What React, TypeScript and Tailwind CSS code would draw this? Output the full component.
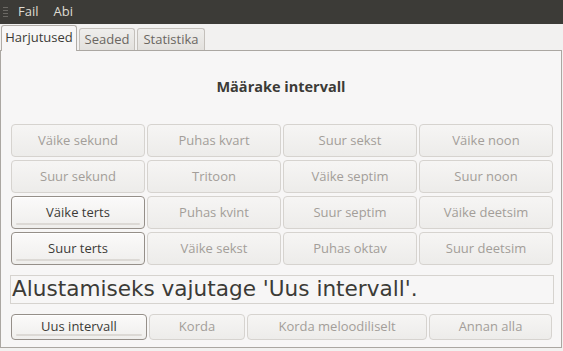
import React from "react";

const grid: { t: string; on?: boolean }[] = [
  { t: "Väike sekund" },
  { t: "Puhas kvart" },
  { t: "Suur sekst" },
  { t: "Väike noon" },
  { t: "Suur sekund" },
  { t: "Tritoon" },
  { t: "Väike septim" },
  { t: "Suur noon" },
  { t: "Väike terts", on: true },
  { t: "Puhas kvint" },
  { t: "Suur septim" },
  { t: "Väike deetsim" },
  { t: "Suur terts", on: true },
  { t: "Väike sekst" },
  { t: "Puhas oktav" },
  { t: "Suur deetsim" },
];

function Btn({ t, on, className = "" }: { t: string; on?: boolean; className?: string }) {
  if (on) {
    return (
      <div
        className={
          "relative flex items-center justify-center rounded-[4px] border border-[#958f89] bg-gradient-to-b from-[#fbfafa] to-[#efeeec] text-[#3c3b37] shadow-[inset_0_1px_0_#ffffff] " +
          className
        }
      >
        <span>{t}</span>
        <div className="absolute left-[4px] right-[4px] bottom-[3px] h-[2px] rounded-full bg-[#dcd9d5]" />
      </div>
    );
  }
  return (
    <div
      className={
        "flex items-center justify-center rounded-[4px] border border-[#d6d3cf] bg-gradient-to-b from-[#f6f5f4] to-[#edecea] text-[#a39e99] " +
        className
      }
    >
      <span>{t}</span>
    </div>
  );
}

export default function App() {
  return (
    <div
      className="w-[563px] h-[351px] bg-[#f2f1f0] flex flex-col overflow-hidden"
      style={{ fontFamily: "'Open Sans', 'DejaVu Sans', sans-serif" }}
    >
      {/* menubar */}
      <div className="h-[24px] bg-[#3c3b37] flex items-center text-[13px] text-[#dfdbd2] shrink-0">
        <div className="ml-[3px] w-[5px] flex flex-col gap-[2px]">
          <div className="h-[1px] bg-[#6b6964]" />
          <div className="h-[1px] bg-[#6b6964]" />
          <div className="h-[1px] bg-[#6b6964]" />
          <div className="h-[1px] bg-[#6b6964]" />
        </div>
        <span className="ml-[10px]">Fail</span>
        <span className="ml-[15px]">Abi</span>
      </div>

      {/* tabs */}
      <div className="h-[26px] flex items-end pl-[1px] shrink-0 relative z-10 text-[13px]">
        <div className="h-[26px] w-[76px] border border-b-0 border-[#b0aca7] rounded-t-[3px] bg-[#f7f6f6] flex items-center justify-center text-[#3c3b37] -mb-[1px] pb-[1px]">
          Harjutused
        </div>
        <div className="ml-[2px] h-[22px] w-[56px] border border-b-0 border-[#c4c0bb] rounded-t-[3px] bg-gradient-to-b from-[#efeeec] to-[#e3e1de] flex items-center justify-center text-[#6a6661]">
          Seaded
        </div>
        <div className="ml-[2px] h-[22px] w-[68px] border border-b-0 border-[#c4c0bb] rounded-t-[3px] bg-gradient-to-b from-[#efeeec] to-[#e3e1de] flex items-center justify-center text-[#6a6661]">
          Statistika
        </div>
      </div>

      {/* panel */}
      <div className="flex-1 mr-[1px] mb-[3px] border border-[#aba7a2] bg-[#f7f6f6] flex flex-col">
        <div className="h-[73px] pb-[1px] flex items-center justify-center font-bold text-[14.5px] text-[#3c3b37] shrink-0">
          Määrake intervall
        </div>
        <div className="ml-[10px] mr-[8px] grid grid-cols-4 gap-x-[2px] gap-y-[3px] text-[13px]">
          {grid.map((g) => (
            <Btn key={g.t} t={g.t} on={g.on} className="h-[33px]" />
          ))}
        </div>
        <div
          className="mt-[10px] ml-[9px] mr-[7px] h-[29px] border border-[#d6d3cf] flex items-center pl-[1px] text-[21.6px] text-[#3c3b37]"
          style={{ fontFamily: "'DejaVu Sans', sans-serif" }}
        >
          Alustamiseks vajutage 'Uus intervall'.
        </div>
        <div className="mt-[10px] ml-[10px] flex gap-[2px] text-[13px]">
          <Btn t="Uus intervall" on className="h-[26px] w-[136px]" />
          <Btn t="Korda" className="h-[26px] w-[96px]" />
          <Btn t="Korda meloodiliselt" className="h-[26px] w-[180px]" />
          <Btn t="Annan alla" className="h-[26px] w-[123px]" />
        </div>
      </div>
    </div>
  );
}
